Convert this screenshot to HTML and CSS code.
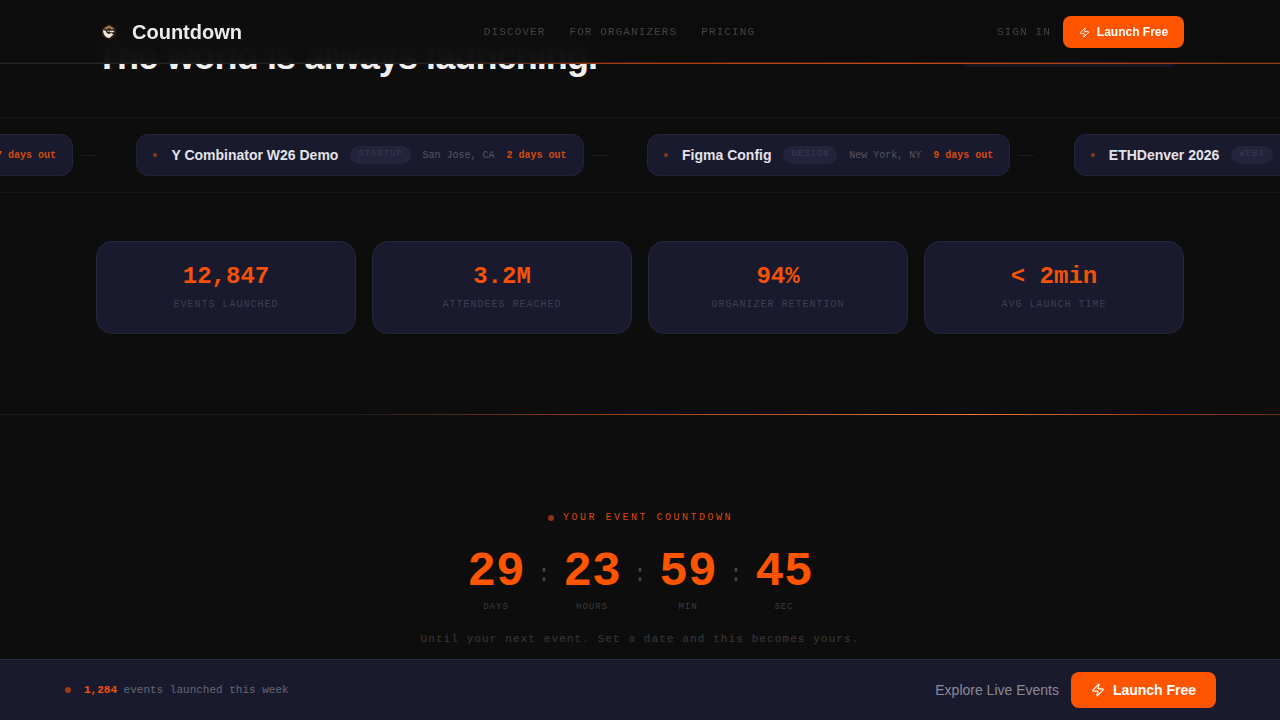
FILE: index.html
```html
<!DOCTYPE html>
<html>
  <head>
    <title>Countdown</title>
    <link rel="stylesheet" href="styles.css">
  </head>
  <body>
    <nav class="nav">
      <div class="brand">
        <svg class="logo" viewBox="0 0 18 18">
          <path d="M9 1l7 4v8l-7 4-7-4V5z" fill="#2e2016"/>
          <path d="M9 2.500l5 2.800-2 1.400L9 5 6 6.700 4 5.300z" fill="#a07a52"/>
          <path d="M3 7l2.800.8c.2 1.800 1.400 3 3.200 3.200l2.200-1 2.300 1.500L9.500 15C6 15 3 11.500 3 7z" fill="#f0e8dc"/>
          <path d="M7 7.800h6.500l1 1.200-3 .4-1.800-.9-2.200.3z" fill="#e8dfd2"/>
        </svg>
        <span class="brand-name">Countdown</span>
      </div>
      <ul class="nav-links">
        <li>DISCOVER</li>
        <li>FOR ORGANIZERS</li>
        <li>PRICING</li>
      </ul>
      <div class="nav-right">
        <span class="sign-in">SIGN IN</span>
        <a class="btn btn-small">
          <svg class="zap" viewBox="0 0 24 24"><path d="M4 14a1 1 0 0 1-.78-1.630l9.900-10.200a.5.5 0 0 1 .86.46l-1.920 6.020A1 1 0 0 0 13 10h7a1 1 0 0 1 .78 1.630l-9.900 10.200a.5.5 0 0 1-.86-.46l1.920-6.020A1 1 0 0 0 11 14z"/></svg>
          Launch Free
        </a>
      </div>
    </nav>

    <section class="hero">
      <h1>The world is always launching.</h1>
      <div class="hero-chip"></div>
    </section>

    <section class="ticker">
      <div class="ticker-track">
        <div class="event">
          <span class="event-dot"></span>
          <b class="event-name">SXSW Interactive</b>
          <span class="event-tag">TECH</span>
          <span class="event-place">Austin, TX</span>
          <span class="event-days">7 days out</span>
        </div>
        <span class="dash"></span>
        <div class="event">
          <span class="event-dot"></span>
          <b class="event-name">Y Combinator W26 Demo</b>
          <span class="event-tag">STARTUP</span>
          <span class="event-place">San Jose, CA</span>
          <span class="event-days">2 days out</span>
        </div>
        <span class="dash"></span>
        <div class="event">
          <span class="event-dot"></span>
          <b class="event-name">Figma Config</b>
          <span class="event-tag">DESIGN</span>
          <span class="event-place">New York, NY</span>
          <span class="event-days">9 days out</span>
        </div>
        <span class="dash"></span>
        <div class="event">
          <span class="event-dot"></span>
          <b class="event-name">ETHDenver 2026</b>
          <span class="event-tag">WEB3</span>
          <span class="event-place">Denver, CO</span>
          <span class="event-days">5 days out</span>
        </div>
      </div>
    </section>

    <section class="stats">
      <div class="stat">
        <div class="stat-num">12,847</div>
        <div class="stat-label">EVENTS LAUNCHED</div>
      </div>
      <div class="stat">
        <div class="stat-num">3.2M</div>
        <div class="stat-label">ATTENDEES REACHED</div>
      </div>
      <div class="stat">
        <div class="stat-num">94%</div>
        <div class="stat-label">ORGANIZER RETENTION</div>
      </div>
      <div class="stat">
        <div class="stat-num">&lt; 2min</div>
        <div class="stat-label">AVG LAUNCH TIME</div>
      </div>
    </section>

    <div class="rule"></div>

    <section class="countdown">
      <div class="eyebrow"><span class="eyebrow-dot"></span>YOUR EVENT COUNTDOWN</div>
      <div class="timer">
        <div class="unit"><div class="digits">29</div><div class="unit-label">DAYS</div></div>
        <div class="colon">:</div>
        <div class="unit"><div class="digits">23</div><div class="unit-label">HOURS</div></div>
        <div class="colon">:</div>
        <div class="unit"><div class="digits">59</div><div class="unit-label">MIN</div></div>
        <div class="colon">:</div>
        <div class="unit"><div class="digits">45</div><div class="unit-label">SEC</div></div>
      </div>
      <p class="note">Until your next event. Set a date and this becomes yours.</p>
    </section>

    <footer class="bar">
      <div class="bar-left">
        <span class="bar-dot"></span>
        <span class="bar-text"><b>1,284</b> events launched this week</span>
      </div>
      <div class="bar-right">
        <span class="explore">Explore Live Events</span>
        <a class="btn btn-large">
          <svg class="zap" viewBox="0 0 24 24"><path d="M4 14a1 1 0 0 1-.78-1.630l9.900-10.200a.5.5 0 0 1 .86.46l-1.920 6.020A1 1 0 0 0 13 10h7a1 1 0 0 1 .78 1.630l-9.900 10.200a.5.5 0 0 1-.86-.46l1.920-6.020A1 1 0 0 0 11 14z"/></svg>
          Launch Free
        </a>
      </div>
    </footer>
  </body>
</html>
```

FILE: styles.css
```css
html,
body {
  margin: 0;
  height: 720px;
  overflow: hidden;
}

body {
  background-color: #0d0d0d;
  font-family: "Liberation Sans", Arial, sans-serif;
  color: #f0f0f0;
}

/* Top nav sits over the scrolled page */
.nav {
  position: absolute;
  top: 0;
  left: 0;
  right: 0;
  z-index: 5;
  height: 64px;
  box-sizing: border-box;
  padding: 0 96px;
  display: flex;
  align-items: center;
  justify-content: space-between;
  background-color: rgba(13, 13, 13, 0.95);
  backdrop-filter: blur(12px);
}

.nav::before,
.nav::after {
  content: "";
  position: absolute;
  left: 0;
  right: 0;
  height: 1px;
  background: linear-gradient(90deg, #242424, #242424 35%, #a83c14 48%, #c8481a 70%, #8c3a18);
}

.nav::before {
  bottom: 1px;
  opacity: 0.35;
}

.nav::after {
  bottom: 0;
}

.brand {
  display: flex;
  align-items: center;
  gap: 14px;
  padding-left: 4px;
}

.logo {
  width: 18px;
  height: 18px;
}

.brand-name {
  margin-top: 1px;
  font-size: 20px;
  font-weight: 700;
  color: #ececec;
}

.nav-links {
  list-style: none;
  display: flex;
  gap: 24px;
  margin: 0;
  padding: 0;
  font-family: "Liberation Mono", monospace;
  font-size: 11px;
  letter-spacing: 0.1em;
  color: #444;
}

.nav-right {
  display: flex;
  align-items: center;
  gap: 12px;
}

.sign-in {
  font-family: "Liberation Mono", monospace;
  font-size: 11px;
  letter-spacing: 0.1em;
  color: #444;
}

.btn {
  display: flex;
  align-items: center;
  justify-content: center;
  background-color: #ff5500;
  color: #fff;
  font-weight: 700;
  border-radius: 8px;
}

.btn-small {
  width: 121px;
  height: 32px;
  gap: 7px;
  font-size: 12px;
}

.btn-small .zap {
  width: 11px;
  height: 11px;
}

.btn-large {
  width: 145px;
  height: 36px;
  gap: 8px;
  font-size: 14px;
}

.btn-large .zap {
  width: 14px;
  height: 14px;
}

.zap {
  fill: none;
  stroke: #fff;
  stroke-width: 2;
  stroke-linecap: round;
  stroke-linejoin: round;
}

.hero {
  height: 117px;
  padding: 0 96px;
  display: flex;
  justify-content: space-between;
  box-sizing: border-box;
}

.hero h1 {
  margin: 35px 0 0;
  font-size: 36px;
  line-height: 44px;
  font-weight: 700;
  letter-spacing: -0.9px;
  color: #f0f0f0;
}

.hero-chip {
  width: 218px;
  height: 67px;
  margin-right: 6px;
  border-radius: 8px;
  background-color: #161322;
}

.ticker {
  height: 76px;
  border-top: 1px solid #161616;
  border-bottom: 1px solid #161616;
  box-sizing: border-box;
  display: flex;
  align-items: center;
  overflow: hidden;
}

.ticker-track {
  display: flex;
  align-items: center;
  flex: none;
  margin-left: -291.500px;
}

.event {
  flex: none;
  display: flex;
  align-items: center;
  height: 42px;
  padding: 0 16px;
  box-sizing: border-box;
  background-color: #1a1a2e;
  border: 1px solid #23233a;
  border-radius: 12px;
}

.event-dot {
  width: 4px;
  height: 4px;
  border-radius: 50%;
  background-color: #8f3416;
  margin-right: 14px;
}

.event-name {
  font-size: 14px;
  color: #e2e2ea;
  white-space: nowrap;
}

.event-tag {
  margin-left: 12px;
  padding: 0 8px;
  height: 18px;
  line-height: 17px;
  border-radius: 9px;
  background-color: #23233c;
  font-family: "Liberation Mono", monospace;
  font-size: 9px;
  letter-spacing: 0.1em;
  color: #3a3a55;
}

.event-place {
  margin-left: 12px;
  font-family: "Liberation Mono", monospace;
  font-size: 10px;
  color: #55555f;
  white-space: nowrap;
}

.event-days {
  margin-left: 12px;
  font-family: "Liberation Mono", monospace;
  font-size: 10px;
  font-weight: 700;
  color: #d44a0e;
  white-space: nowrap;
}

.dash {
  flex: none;
  width: 16px;
  height: 1px;
  margin: 0 39.500px 0 8px;
  background-color: #1c1c1c;
}

.stats {
  display: grid;
  grid-template-columns: repeat(4, 1fr);
  gap: 16px;
  margin: 48px 96px 0;
}

.stat {
  height: 93px;
  box-sizing: border-box;
  padding-top: 21px;
  text-align: center;
  background-color: #1a1a2e;
  border: 1px solid #25253e;
  border-radius: 16px;
}

.stat-num {
  font-family: "Liberation Mono", monospace;
  font-size: 24px;
  line-height: 28px;
  font-weight: 700;
  color: #f55208;
}

.stat-label {
  margin-top: 7px;
  font-family: "Liberation Mono", monospace;
  font-size: 10px;
  line-height: 14px;
  letter-spacing: 0.1em;
  color: #3e3e54;
}

.rule {
  height: 1px;
  margin-top: 80px;
  background: linear-gradient(90deg, #1c1c1c, #1e1c1a 28%, #8c3a14 45%, #f07a3c 76%, #a03c14 90%, #6a2e14);
}

.countdown {
  display: flex;
  flex-direction: column;
  align-items: center;
  padding-top: 96px;
}

.eyebrow {
  display: flex;
  align-items: center;
  padding-left: 1px;
  font-family: "Liberation Mono", monospace;
  font-size: 10px;
  line-height: 14px;
  letter-spacing: 0.25em;
  color: #d84a0c;
}

.eyebrow-dot {
  width: 6px;
  height: 6px;
  margin-right: 9px;
  border-radius: 50%;
  background-color: #8c3514;
}

.timer {
  display: flex;
  align-items: flex-start;
  margin-top: 20px;
}

.unit {
  width: 58px;
  text-align: center;
}

.digits {
  font-family: "Liberation Mono", monospace;
  font-size: 48px;
  line-height: 54px;
  font-weight: 700;
  color: #ff5500;
}

.unit-label {
  margin-top: 2px;
  font-family: "Liberation Mono", monospace;
  font-size: 9px;
  line-height: 12px;
  letter-spacing: 1px;
  color: #3c3c3c;
}

.colon {
  width: 38px;
  text-align: center;
  font-family: "Liberation Mono", monospace;
  font-size: 24px;
  line-height: 60px;
  color: #444;
}

.note {
  margin: 18.500px 0 0;
  font-family: "Liberation Mono", monospace;
  font-size: 11px;
  line-height: 14px;
  letter-spacing: 0.1em;
  color: #3a3a3a;
}

/* Sticky bar at the bottom of the window */
.bar {
  position: absolute;
  left: 0;
  right: 0;
  bottom: 0;
  height: 61px;
  box-sizing: border-box;
  padding: 0 64px;
  display: flex;
  align-items: center;
  justify-content: space-between;
  background-color: #1a1a2e;
  border-top: 1px solid #2c2c40;
}

.bar-left {
  display: flex;
  align-items: center;
  gap: 13px;
  margin-left: 1px;
}

.bar-dot {
  width: 6px;
  height: 6px;
  border-radius: 50%;
  background-color: #a03a14;
}

.bar-text {
  font-family: "Liberation Mono", monospace;
  font-size: 11px;
  color: #666674;
}

.bar-text b {
  color: #f55208;
}

.bar-right {
  display: flex;
  align-items: center;
  gap: 12px;
}

.explore {
  font-size: 14px;
  color: #8a8a98;
}
```
